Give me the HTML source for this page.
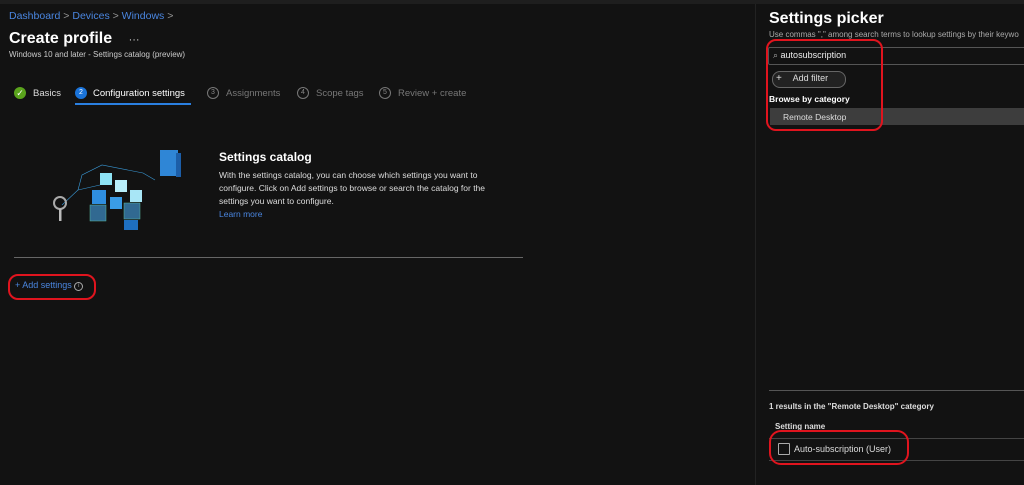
<!DOCTYPE html><html><head><style>
body{margin:0;width:1024px;height:485px;background:#121212;font-family:"Liberation Sans",sans-serif;position:relative;overflow:hidden;color:#fff}
.a{position:absolute;white-space:nowrap}
.r{position:absolute;border:2px solid #e0141e;border-radius:10px}
</style></head><body>
<div class="a" style="left:0;top:0;width:1024px;height:4px;background:#1e1e1e"></div>
<div class="a" style="left:9px;top:10px;font-size:10.5px;color:#4a86e0">Dashboard <span style="color:#999">&gt;</span> Devices <span style="color:#999">&gt;</span> Windows <span style="color:#999">&gt;</span></div>
<div class="a" style="left:9px;top:30px;font-size:16px;font-weight:bold">Create profile <span style="font-size:11px;font-weight:normal;margin-left:12px;color:#ccc">···</span></div>
<div class="a" style="left:9px;top:50px;font-size:8px;color:#ccc">Windows 10 and later - Settings catalog (preview)</div>
<div class="a" style="left:14px;top:87px;width:12px;height:12px;border-radius:50%;background:#5aa31c;color:#fff;font-size:9px;text-align:center;line-height:12px">✓</div>
<div class="a" style="left:33px;top:88px;font-size:9.5px;color:#ddd">Basics</div>
<div class="a" style="left:75px;top:87px;width:12px;height:12px;border-radius:50%;background:#1a73d9;font-size:7px;text-align:center;line-height:12px">2</div>
<div class="a" style="left:93px;top:88px;font-size:9.5px;color:#fff">Configuration settings</div>
<div class="a" style="left:75px;top:103px;width:116px;height:2px;background:#2a7fe0"></div>
<div class="a" style="left:207px;top:87px;width:10px;height:10px;border-radius:50%;border:1px solid #777;font-size:7px;text-align:center;line-height:10px;color:#888">3</div>
<div class="a" style="left:226px;top:88px;font-size:9.5px;color:#777">Assignments</div>
<div class="a" style="left:297px;top:87px;width:10px;height:10px;border-radius:50%;border:1px solid #777;font-size:7px;text-align:center;line-height:10px;color:#888">4</div>
<div class="a" style="left:316px;top:88px;font-size:9.5px;color:#777">Scope tags</div>
<div class="a" style="left:379px;top:87px;width:10px;height:10px;border-radius:50%;border:1px solid #777;font-size:7px;text-align:center;line-height:10px;color:#888">5</div>
<div class="a" style="left:398px;top:88px;font-size:9.5px;color:#777">Review + create</div>
<svg class="a" style="left:50px;top:145px" width="135" height="85">
<g stroke="#3a9ad8" stroke-width="0.6" fill="none"><path d="M12 60 L28 45 L32 30 L52 20 L93 28 L105 35"/><path d="M28 45 L50 40"/></g>
<rect x="50" y="28" width="12" height="12" fill="#8ee3f5"/><rect x="65" y="35" width="12" height="12" fill="#b8eefa"/><rect x="80" y="45" width="12" height="12" fill="#a8e6f6"/>
<rect x="42" y="45" width="14" height="14" fill="#2f8ee0"/><rect x="60" y="52" width="12" height="12" fill="#3a9ce6"/>
<rect x="40" y="60" width="16" height="16" fill="#3f8fc8" opacity=".7" stroke="#7fd" stroke-width=".5"/><rect x="74" y="58" width="16" height="16" fill="#3f8fc8" opacity=".7" stroke="#7fd" stroke-width=".5"/>
<rect x="74" y="75" width="14" height="10" fill="#1e6fc0"/>
<rect x="110" y="5" width="18" height="26" fill="#2f86d6"/><rect x="126" y="8" width="5" height="24" fill="#1c5ea8"/>
<circle cx="10" cy="58" r="6" fill="none" stroke="#aaa" stroke-width="2"/><rect x="9" y="64" width="2.5" height="12" fill="#bbb"/>
</svg>
<div class="a" style="left:219px;top:150px;font-size:12px;font-weight:bold">Settings catalog</div>
<div class="a" style="left:219px;top:169px;font-size:8.5px;line-height:13px;color:#ddd;white-space:normal;width:285px">With the settings catalog, you can choose which settings you want to configure. Click on Add settings to browse or search the catalog for the settings you want to configure.</div>
<div class="a" style="left:219px;top:209px;font-size:8.5px;color:#4a86e0">Learn more</div>
<div class="a" style="left:14px;top:257px;width:509px;height:1px;background:#666"></div>
<div class="a" style="left:15px;top:280px;font-size:9px;color:#4a86e0;line-height:11px">+ Add settings <span style="display:inline-block;width:7px;height:7px;color:#aaa;border:1px solid #aaa;border-radius:50%;font-size:6px;line-height:7px;text-align:center;vertical-align:1px">i</span></div>
<div class="r" style="left:8px;top:274px;width:84px;height:22px"></div>
<div class="a" style="left:755px;top:4px;width:1px;height:481px;background:#222"></div>
<div class="a" style="left:769px;top:10px;font-size:16px;font-weight:bold">Settings picker</div>
<div class="a" style="left:769px;top:30px;font-size:8px;color:#aaa">Use commas "," among search terms to lookup settings by their keywo</div>
<div class="a" style="left:768px;top:47px;width:260px;height:16px;border:1px solid #555;border-radius:2px"></div>
<div class="a" style="left:773px;top:50px;font-size:9px;color:#eee"><span style="color:#aaa">⌕</span> autosubscription</div>
<div class="a" style="left:772px;top:71px;width:72px;height:15px;border:1px solid #666;border-radius:8px;background:#222"></div>
<div class="a" style="left:776px;top:73px;font-size:10px;color:#ddd;line-height:11px">+ <span style="font-size:9px;margin-left:8px">Add filter</span></div>
<div class="a" style="left:769px;top:94px;font-size:8.5px;font-weight:bold">Browse by category</div>
<div class="a" style="left:770px;top:108px;width:254px;height:17px;background:#3d3d3d"></div>
<div class="a" style="left:783px;top:112px;font-size:8.5px;color:#ddd">Remote Desktop</div>
<div class="r" style="left:766px;top:39px;width:113px;height:88px"></div>
<div class="a" style="left:769px;top:390px;width:255px;height:1px;background:#555"></div>
<div class="a" style="left:769px;top:402px;font-size:8px;font-weight:bold;color:#ddd">1 results in the "Remote Desktop" category</div>
<div class="a" style="left:775px;top:422px;font-size:8px;font-weight:bold;color:#ddd">Setting name</div>
<div class="a" style="left:769px;top:438px;width:255px;height:1px;background:#444"></div>
<div class="a" style="left:769px;top:460px;width:255px;height:1px;background:#444"></div>
<div class="a" style="left:778px;top:443px;width:10px;height:10px;border:1px solid #aaa;border-radius:1px"></div>
<div class="a" style="left:794px;top:444px;font-size:9px;color:#ddd">Auto-subscription (User)</div>
<div class="r" style="left:769px;top:430px;width:136px;height:31px;border-radius:12px"></div>
</body></html>
